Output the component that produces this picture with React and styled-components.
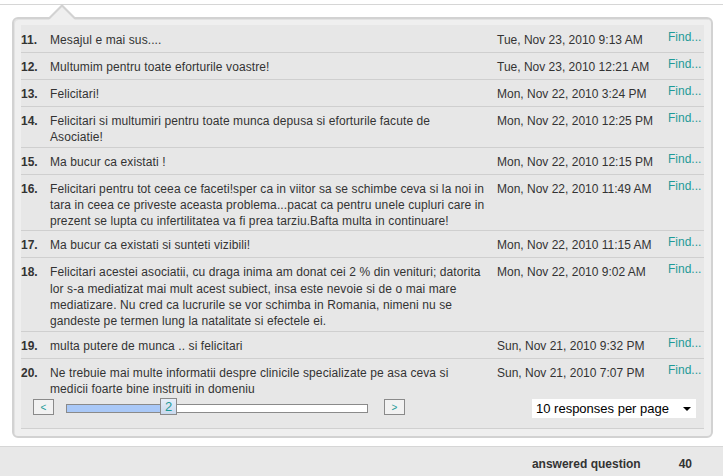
import React from 'react';
import styled, { createGlobalStyle } from 'styled-components';

const GlobalStyle = createGlobalStyle`
  html, body {
    margin: 0;
    padding: 0;
    background: #e8e8e8;
  }
  body {
    font-family: "Liberation Sans", Arial, sans-serif;
    font-size: 12px;
    color: #333;
  }
`;

const Page = styled.div`
  width: 723px;
  height: 476px;
  overflow: hidden;
  display: flex;
  flex-direction: column;
`;

const WhiteArea = styled.div`
  background: #fff;
  padding-top: 4px;
`;

const WhiteInner = styled.div`
  border-top: 1px solid #d6d6d6;
  border-bottom: 1px solid #d6d6d6;
  padding: 12px 10px 8px 12px;
`;

const Panel = styled.div`
  position: relative;
  background: #efefef;
  border: 2px solid #d2d2d2;
  border-radius: 6px;
  box-shadow: inset 1px 1px 0 #e2e2e2;
  padding: 6px 7px 7px 7px;

  &::before {
    content: '';
    position: absolute;
    top: -15px;
    left: 35px;
    border-left: 13px solid transparent;
    border-right: 13px solid transparent;
    border-bottom: 13px solid #d2d2d2;
  }

  &::after {
    content: '';
    position: absolute;
    top: -12px;
    left: 35px;
    border-left: 13px solid transparent;
    border-right: 13px solid transparent;
    border-bottom: 13px solid #efefef;
  }
`;

const Table = styled.div`
  background: #e7e7e7;
  border-bottom: 1px solid #d0d0d0;
`;

const Row = styled.div`
  display: grid;
  grid-template-columns: 29px 447px 171px 1fr;
  box-sizing: border-box;
  min-height: 27px;
  border-top: 1px solid ${p => (p.$first ? 'transparent' : '#cfcfcf')};
  line-height: 16.3px;
`;

const Cell = styled.div`
  padding: 6px 5px 1px 0;
`;

const Num = styled(Cell)`
  font-weight: bold;
`;

const Line = styled.span`
  display: block;
  white-space: nowrap;
  letter-spacing: 0.1px;
`;

const FindLink = styled.a`
  display: block;
  padding-top: 3px;
  color: #1f9a98;
  text-decoration: none;
  cursor: pointer;
`;

const Pager = styled.div`
  display: flex;
  align-items: flex-start;
  padding: 0 8px 10px 12px;
`;

const PageButton = styled.button`
  width: 21px;
  height: 16px;
  margin-top: 1px;
  padding: 0;
  border: 1px solid #8a8a8a;
  background: #f2f2f2;
  color: #1f9a98;
  font-family: "Liberation Sans", Arial, sans-serif;
  font-size: 10px;
  line-height: 13px;
`;

const Slider = styled.div`
  position: relative;
  width: 302px;
  height: 9px;
  margin: 6px 16px 0 12px;
  border: 1px solid #8a8a8a;
  background: #fff;
  box-sizing: border-box;
`;

const SliderFill = styled.div`
  height: 100%;
  background: #a9c8f7;
`;

const Handle = styled.div`
  position: absolute;
  top: -7px;
  width: 17px;
  height: 17px;
  box-sizing: border-box;
  border: 1px solid #8a8a8a;
  background: linear-gradient(#e6eef9, #c9d9ee);
  color: #1f9a98;
  font-size: 13px;
  line-height: 15px;
  text-align: center;
`;

const Spacer = styled.div`
  flex: 1;
`;

const Select = styled.div`
  width: 164px;
  height: 19px;
  margin-top: 1px;
  background: #fff;
  display: flex;
  align-items: center;
  justify-content: space-between;
  padding: 0 5px 0 4px;
  box-sizing: border-box;
  color: #000;
  font-size: 13px;
`;

const Caret = styled.span`
  width: 0;
  height: 0;
  border-left: 4px solid transparent;
  border-right: 4px solid transparent;
  border-top: 4px solid #000;
`;

const Footer = styled.div`
  flex: 1;
  background: #e8e8e8;
  display: flex;
  justify-content: flex-end;
  padding: 10px 31px 0 0;
  font-weight: bold;
  color: #333;
`;

const FooterLabel = styled.span`
  margin-right: 38px;
`;

const responses = [
  [11, ['Mesajul e mai sus....'], 'Tue, Nov 23, 2010 9:13 AM'],
  [12, ['Multumim pentru toate eforturile voastre!'], 'Tue, Nov 23, 2010 12:21 AM'],
  [13, ['Felicitari!'], 'Mon, Nov 22, 2010 3:24 PM'],
  [14, [
    'Felicitari si multumiri pentru toate munca depusa si eforturile facute de',
    'Asociatie!',
  ], 'Mon, Nov 22, 2010 12:25 PM'],
  [15, ['Ma bucur ca existati !'], 'Mon, Nov 22, 2010 12:15 PM'],
  [16, [
    'Felicitari pentru tot ceea ce faceti!sper ca in viitor sa se schimbe ceva si la noi in',
    'tara in ceea ce priveste aceasta problema...pacat ca pentru unele cupluri care in',
    'prezent se lupta cu infertilitatea va fi prea tarziu.Bafta multa in continuare!',
  ], 'Mon, Nov 22, 2010 11:49 AM'],
  [17, ['Ma bucur ca existati si sunteti vizibili!'], 'Mon, Nov 22, 2010 11:15 AM'],
  [18, [
    'Felicitari acestei asociatii, cu draga inima am donat cei 2 % din venituri; datorita',
    'lor s-a mediatizat mai mult acest subiect, insa este nevoie si de o mai mare',
    'mediatizare. Nu cred ca lucrurile se vor schimba in Romania, nimeni nu se',
    'gandeste pe termen lung la natalitate si efectele ei.',
  ], 'Mon, Nov 22, 2010 9:02 AM'],
  [19, ['multa putere de munca .. si felicitari'], 'Sun, Nov 21, 2010 9:32 PM'],
  [20, [
    'Ne trebuie mai multe informatii despre clinicile specializate pe asa ceva si',
    'medicii foarte bine instruiti in domeniu',
  ], 'Sun, Nov 21, 2010 7:07 PM'],
];

export default function App() {
  const handleLeft = 94;
  return (
    <Page>
      <GlobalStyle />
      <WhiteArea>
        <WhiteInner>
          <Panel>
            <Table>
              {responses.map(([n, lines, date], i) => (
                <Row key={n} $first={i === 0}>
                  <Num>{n}.</Num>
                  <Cell>
                    {lines.map(line => (
                      <Line key={line}>{line}</Line>
                    ))}
                  </Cell>
                  <Cell>{date}</Cell>
                  <FindLink>Find...</FindLink>
                </Row>
              ))}
              <Pager>
                <PageButton>&lt;</PageButton>
                <Slider>
                  <SliderFill style={{ width: handleLeft }} />
                  <Handle style={{ left: handleLeft - 1 }}>2</Handle>
                </Slider>
                <PageButton>&gt;</PageButton>
                <Spacer />
                <Select>
                  <span>10 responses per page</span>
                  <Caret />
                </Select>
              </Pager>
            </Table>
          </Panel>
        </WhiteInner>
      </WhiteArea>
      <Footer>
        <FooterLabel>answered question</FooterLabel>
        <span>40</span>
      </Footer>
    </Page>
  );
}
